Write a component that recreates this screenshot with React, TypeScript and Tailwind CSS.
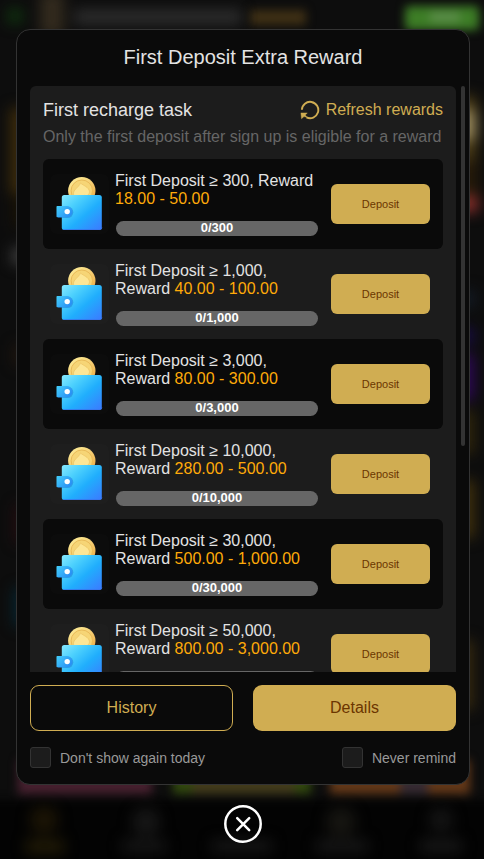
import { useState } from "react";

const tasks = [
  { goal: "300", reward: "18.00 - 50.00" },
  { goal: "1,000", reward: "40.00 - 100.00" },
  { goal: "3,000", reward: "80.00 - 300.00" },
  { goal: "10,000", reward: "280.00 - 500.00" },
  { goal: "30,000", reward: "500.00 - 1,000.00" },
  { goal: "50,000", reward: "800.00 - 3,000.00" },
];

function Backdrop() {
  return (
    <svg className="absolute inset-0 h-full w-full" viewBox="0 0 484 859" preserveAspectRatio="none" aria-hidden="true">
      <defs>
        <filter id="soft" x="-40" y="-40" width="564" height="939" filterUnits="userSpaceOnUse" colorInterpolationFilters="sRGB">
          <feGaussianBlur stdDeviation="5" />
        </filter>
        <filter id="softer" x="-40" y="-40" width="564" height="939" filterUnits="userSpaceOnUse" colorInterpolationFilters="sRGB">
          <feGaussianBlur stdDeviation="7" />
        </filter>
      </defs>
      <rect width="484" height="859" fill="#0d0d0d" />
      <g filter="url(#soft)">
        <rect x="-20" y="800" width="524" height="80" fill="#030303" />
        <rect x="250" y="10" width="56" height="15" fill="#3f3015" />
        <rect x="405" y="6" width="74" height="24" rx="4" fill="#3d7d26" />
        <rect x="430" y="12" width="30" height="10" fill="#5b8c4a" />
        <rect x="18" y="760" width="134" height="34" fill="#47202f" />
        <rect x="173" y="760" width="138" height="34" fill="#31480e" />
        <rect x="192" y="760" width="103" height="34" fill="#433c1b" />
        <rect x="330" y="760" width="140" height="34" fill="#643818" />
        <rect x="400" y="760" width="28" height="34" fill="#372b33" />
      </g>
      <g filter="url(#softer)">
        <rect x="8" y="9" width="14" height="14" fill="#10380f" />
        <rect x="40" y="-8" width="24" height="44" fill="#332b1e" />
        <rect x="74" y="9" width="168" height="16" fill="#2c2c2c" />
        <rect x="10" y="108" width="30" height="86" fill="#3c2b0a" />
        <rect x="13" y="196" width="20" height="30" fill="#191204" />
        <rect x="12" y="248" width="20" height="16" fill="#414141" />
        <rect x="14" y="345" width="10" height="20" fill="#24180f" />
        <rect x="15" y="505" width="10" height="38" fill="#290c10" />
        <rect x="14" y="588" width="20" height="38" fill="#052632" />
        <rect x="456" y="96" width="20" height="64" fill="#4b3b14" />
        <rect x="452" y="110" width="24" height="30" fill="#a08e5c" />
        <rect x="456" y="160" width="22" height="36" fill="#261a09" />
        <rect x="454" y="196" width="24" height="16" fill="#8f302c" />
        <rect x="456" y="290" width="20" height="18" fill="#121922" />
        <rect x="452" y="328" width="22" height="16" fill="#180b47" />
        <rect x="452" y="354" width="22" height="46" fill="#2d0856" />
        <rect x="454" y="410" width="21" height="44" fill="#2d240b" />
        <rect x="454" y="480" width="21" height="58" fill="#3d2e0c" />
        <rect x="452" y="640" width="22" height="70" fill="#33270e" />
        <circle cx="44" cy="820" r="14" fill="#1b1405" />
        <rect x="26" y="840" width="38" height="13" fill="#231c06" />
        <circle cx="146" cy="822" r="14" fill="#161616" />
        <rect x="122" y="840" width="44" height="12" fill="#161616" />
        <rect x="212" y="840" width="60" height="12" fill="#161616" />
        <circle cx="341" cy="822" r="15" fill="#161511" />
        <rect x="316" y="840" width="52" height="12" fill="#171717" />
        <circle cx="441" cy="820" r="12" fill="#141414" />
        <rect x="420" y="840" width="42" height="12" fill="#181818" />
      </g>
    </svg>
  );
}

function RefreshIcon() {
  return (
    <svg className="h-5 w-5" viewBox="0 0 20 20" fill="none" aria-hidden="true">
      <path d="M1.9 9.8a8.2 8.2 0 1 1 4.6 7.6" stroke="#d0ad52" strokeWidth="1.9" />
      <path d="M.9 12.9h6.4L5.3 15l2 2.4-3.3-.8-2.5 2.1z" fill="#d0ad52" stroke="#d0ad52" strokeWidth="0.4" />
    </svg>
  );
}

function WalletIcon() {
  return (
    <svg className="h-15 w-[59px] shrink-0" viewBox="0 0 59 60" aria-hidden="true">
      <defs>
        <linearGradient id="wallet" x1="0" y1="0" x2="1" y2="1">
          <stop offset="0" stopColor="#86e9ff" />
          <stop offset="0.28" stopColor="#4cd0fd" />
          <stop offset="0.58" stopColor="#20aefd" />
          <stop offset="1" stopColor="#3c79ff" />
        </linearGradient>
        <linearGradient id="clasp" x1="0" y1="0" x2="1" y2="0.6">
          <stop offset="0" stopColor="#42d0fb" />
          <stop offset="1" stopColor="#2a8ff5" />
        </linearGradient>
        <linearGradient id="coin" x1="0" y1="0" x2="0.7" y2="1">
          <stop offset="0" stopColor="#fff3a0" />
          <stop offset="1" stopColor="#edac48" />
        </linearGradient>
      </defs>
      <rect width="59" height="60" rx="7" fill="#808080" fillOpacity="0.02" />
      <circle cx="31.8" cy="16.7" r="13.7" fill="url(#coin)" />
      <circle cx="31.8" cy="16.7" r="10.7" fill="#f6d576" stroke="#e5b450" strokeWidth="0.8" />
      <path d="M30.5 9c2.6 2.6 8.7 4 8.9 8.7.1 3.2-2.7 4.8-5.2 3.5l1.8 3.3h-6l-.6-2.6c-2.3 2-5.7.9-5.9-2.2-.3-4.1 5.3-6.2 7-10.7z" fill="#fde695" stroke="#eabf60" strokeWidth="0.6" />
      <rect x="11.8" y="21" width="40" height="35" rx="2.5" fill="url(#wallet)" />
      <path d="M13.3 55.5h36.5q2 0 2-2" fill="none" stroke="#3976ed" strokeWidth="0.8" />
      <path d="M8 32.5h9.5a5.8 5.8 0 0 1 0 11.6H8z" fill="#1b73cc" fillOpacity="0.45" />
      <path d="M7.3 32h9.5a5.6 5.6 0 0 1 0 11.2H7.3a.8.8 0 0 1-.8-.8v-9.6q0-.8.8-.8z" fill="url(#clasp)" />
      <circle cx="17.2" cy="37.6" r="2.7" fill="#fff" />
    </svg>
  );
}

function TaskRow({ goal, reward, dark }: { goal: string; reward: string; dark: boolean }) {
  return (
    <li className={`flex h-[90px] items-center rounded-md pr-[13px] pl-[7px] ${dark ? "bg-[#0a0a0a]" : ""}`}>
      <WalletIcon />
      <div className="mr-[13px] ml-1.5 flex h-16 min-w-0 flex-1 flex-col justify-between">
        <p className="text-base leading-[18px] text-[#e3e3e3]">
          First Deposit ≥ {goal}, Reward <span className="text-[#ffaa09]">{reward}</span>
        </p>
        <div className="ml-px h-[15px] rounded-full bg-[#666] text-center text-[13px] leading-[13px] font-bold text-white">
          0/{goal}
        </div>
      </div>
      <button type="button" className="h-10 w-[99px] shrink-0 rounded-md bg-[#d0ad52] text-[11px] text-[#6b3500]">
        Deposit
      </button>
    </li>
  );
}

function Tick({ label }: { label: string }) {
  const [on, setOn] = useState(false);
  return (
    <label className="flex items-center gap-[9px] text-sm text-[#999]">
      <input
        type="checkbox"
        checked={on}
        onChange={() => setOn(!on)}
        className="h-[21px] w-[21px] appearance-none rounded-[3px] border border-[#333] bg-[#1c1c1c] checked:bg-[#d0ad52]"
      />
      {label}
    </label>
  );
}

export default function App() {
  return (
    <div className="relative min-h-screen overflow-hidden bg-[#0d0d0d] font-['Liberation_Sans',Arial,sans-serif]">
      <Backdrop />
      <div className="relative flex flex-col items-center pt-[29px] pr-3.5 pl-4">
        <div role="dialog" aria-labelledby="title" className="w-full rounded-[14px] border border-[#333] bg-[#0a0a0a] px-[13px] pb-4">
          <h1 id="title" className="pt-3 pb-3.5 text-center text-xl leading-[30px] text-[#e3e3e3]">
            First Deposit Extra Reward
          </h1>
          <div className="relative">
            <div className="h-[calc(100vh-273px)] overflow-y-auto rounded-t-md bg-[#1c1c1c] px-[13px] pt-3 [scrollbar-width:none]">
              <div className="flex h-6 items-center justify-between">
                <h2 className="text-lg text-[#e3e3e3]">First recharge task</h2>
                <button type="button" className="flex items-center gap-1.5 text-base text-[#d0ad52]">
                  <RefreshIcon />
                  Refresh rewards
                </button>
              </div>
              <p className="pt-[3px] pb-2.5 text-base text-[#666]">
                Only the first deposit after sign up is eligible for a reward
              </p>
              <ul>
                {tasks.map((task, i) => (
                  <TaskRow key={task.goal} goal={task.goal} reward={task.reward} dark={i % 2 === 0} />
                ))}
              </ul>
            </div>
            <div className="absolute top-0 -right-[9px] h-[360px] w-1 rounded-full bg-[#333]" />
          </div>
          <div className="mt-[13px] grid grid-cols-2 gap-5">
            <button type="button" className="h-[46px] rounded-[9px] border border-[#d0ad52] text-base text-[#d0ad52]">
              History
            </button>
            <button type="button" className="h-[46px] rounded-[9px] bg-[#d0ad52] text-base text-[#6b3500]">
              Details
            </button>
          </div>
          <div className="mt-4 flex justify-between">
            <Tick label="Don't show again today" />
            <Tick label="Never remind" />
          </div>
        </div>
        <button type="button" aria-label="Close" className="mt-5">
          <svg className="h-[38px] w-[38px]" viewBox="0 0 38 38" fill="none" stroke="#fff" strokeWidth="2.5" aria-hidden="true">
            <circle cx="19" cy="19" r="17.7" />
            <path d="M13.2 13.2l12 12M25.2 13.2l-12 12" strokeLinecap="round" />
          </svg>
        </button>
      </div>
    </div>
  );
}
